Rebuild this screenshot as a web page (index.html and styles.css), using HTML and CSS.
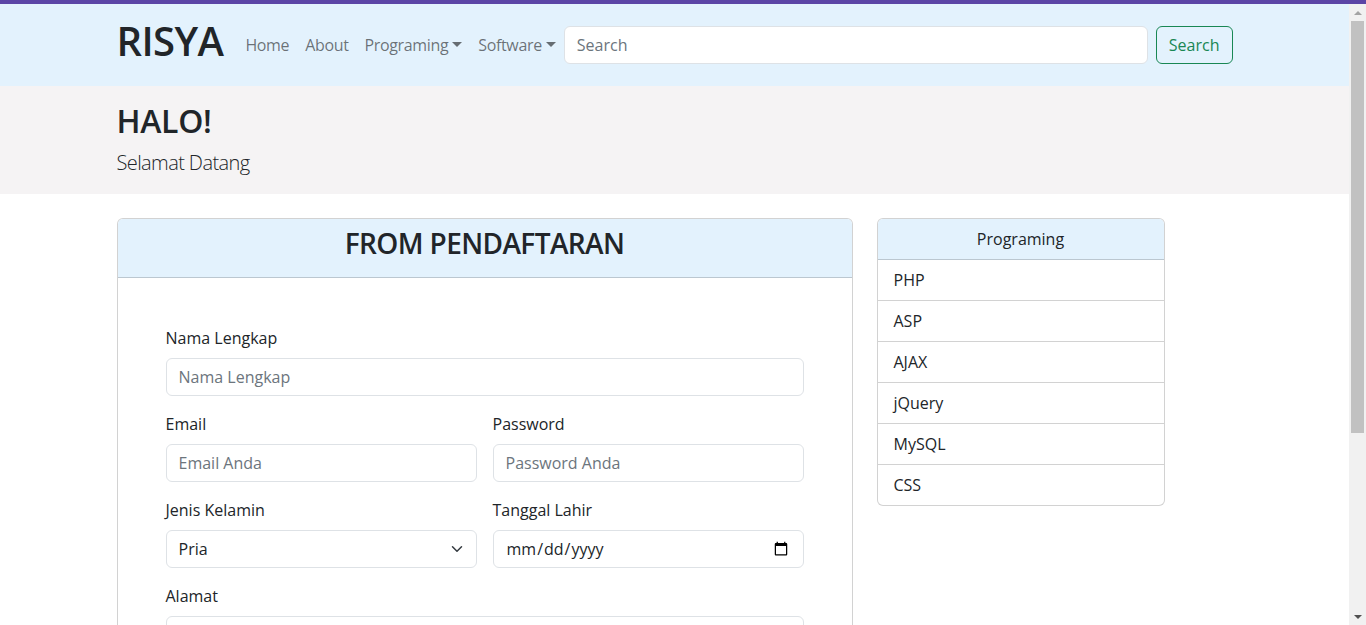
FILE: index.html
```html
<!DOCTYPE html>
<html lang="id">
<head>
<meta charset="utf-8">
<title>RISYA</title>
<link rel="stylesheet" href="styles.css">
</head>
<body>
<div class="topbar"></div>
<div class="frame">
<div class="viewport">
  <nav class="navbar">
    <div class="container nav-inner">
      <a class="brand" href="#">RISYA</a>
      <ul class="nav">
        <li><a class="nav-link" href="#">Home</a></li>
        <li><a class="nav-link" href="#">About</a></li>
        <li><a class="nav-link toggle" href="#">Programing</a></li>
        <li><a class="nav-link toggle" href="#">Software</a></li>
      </ul>
      <form class="search">
        <input class="control search-input" type="search" placeholder="Search">
        <button class="btn-outline" type="button">Search</button>
      </form>
    </div>
  </nav>

  <header class="hero">
    <div class="container">
      <h1 class="hero-title">HALO!</h1>
      <p class="lead">Selamat Datang</p>
    </div>
  </header>

  <main class="container main">
    <section class="card form-card">
      <div class="card-header">
        <h3 class="card-title">FROM PENDAFTARAN</h3>
      </div>
      <div class="card-body">
        <form class="reg-form">
          <div class="field">
            <label class="label">Nama Lengkap</label>
            <input class="control" type="text" placeholder="Nama Lengkap">
          </div>
          <div class="grid2">
            <div class="field">
              <label class="label">Email</label>
              <input class="control" type="email" placeholder="Email Anda">
            </div>
            <div class="field">
              <label class="label">Password</label>
              <input class="control" type="password" placeholder="Password Anda">
            </div>
          </div>
          <div class="grid2">
            <div class="field">
              <label class="label">Jenis Kelamin</label>
              <div class="select-wrap">
                <select class="control select">
                  <option>Pria</option>
                  <option>Wanita</option>
                </select>
                <svg class="chevron" viewBox="0 0 16 16" width="16" height="12"><path d="m2 5 6 6 6-6" fill="none" stroke="#343a40" stroke-width="2" stroke-linecap="round" stroke-linejoin="round"/></svg>
              </div>
            </div>
            <div class="field">
              <label class="label">Tanggal Lahir</label>
              <input class="control date" type="date">
            </div>
          </div>
          <div class="field">
            <label class="label">Alamat</label>
            <textarea class="control textarea" rows="3"></textarea>
          </div>
          <button class="btn-primary" type="button">Daftar</button>
        </form>
      </div>
    </section>

    <aside class="list-group">
      <div class="list-header">Programing</div>
      <a class="list-item" href="#">PHP</a>
      <a class="list-item" href="#">ASP</a>
      <a class="list-item" href="#">AJAX</a>
      <a class="list-item" href="#">jQuery</a>
      <a class="list-item" href="#">MySQL</a>
      <a class="list-item" href="#">CSS</a>
    </aside>
  </main>
</div>
<div class="scrollbar" aria-hidden="true">
  <div class="sb-btn"><span class="arrow-up"></span></div>
  <div class="sb-thumb"></div>
  <div class="sb-track"></div>
  <div class="sb-btn"><span class="arrow-down"></span></div>
</div>
</div>
</body>
</html>
```

FILE: styles.css
```css
* { box-sizing: border-box; }

html, body {
  height: 100%;
  margin: 0;
  overflow: hidden;
}

body {
  font-family: "Open Sans", "Noto Sans", sans-serif;
  font-size: 16px;
  line-height: 1.5;
  color: #212529;
  background: #fff;
}

.topbar {
  height: 4px;
  background: #5b45a6;
}

.frame {
  display: flex;
  height: calc(100% - 4px);
}

.viewport {
  flex: 1;
  min-width: 0;
  overflow: hidden;
}

/* window scrollbar */
.scrollbar {
  width: 17px;
  flex: none;
  display: flex;
  flex-direction: column;
  background: #f1f1f1;
}
.sb-btn {
  height: 17px;
  display: flex;
  align-items: center;
  justify-content: center;
}
.arrow-up {
  border-bottom: 4px solid #a3a3a3;
  border-left: 4px solid transparent;
  border-right: 4px solid transparent;
}
.arrow-down {
  border-top: 4px solid #505050;
  border-left: 4px solid transparent;
  border-right: 4px solid transparent;
}
.sb-thumb {
  height: 412px;
  margin: 0 2px;
  background: #c1c1c1;
}
.sb-track {
  flex: 1;
}

.container {
  width: 1140px;
  margin: 0 auto;
  padding: 0 12px;
}

/* navbar */
.navbar {
  background: #e3f2fd;
  padding: 8px 0;
}
.nav-inner {
  display: flex;
  align-items: center;
}
.brand {
  display: block;
  font-size: 40px;
  font-weight: 600;
  line-height: 48px;
  padding: 5px 0 13px;
  margin-right: 14px;
  color: #212529;
  text-decoration: none;
  letter-spacing: -0.6px;
}
.nav {
  display: flex;
  list-style: none;
  margin: 0;
  padding: 0;
}
.nav-link {
  display: block;
  padding: 8px;
  color: rgba(0, 0, 0, 0.55);
  text-decoration: none;
  letter-spacing: -0.35px;
}
.toggle::after {
  content: "";
  display: inline-block;
  margin-left: 4px;
  vertical-align: 4px;
  border-top: 5px solid;
  border-left: 5px solid transparent;
  border-right: 5px solid transparent;
}
.search {
  flex: 1;
  display: flex;
  margin: 0;
}
.control {
  display: block;
  width: 100%;
  height: 38px;
  padding: 6px 12px;
  font: inherit;
  font-size: 16px;
  line-height: 24px;
  color: #212529;
  background: #fff;
  border: 1px solid #dee2e6;
  border-radius: 6px;
}
.control::placeholder {
  color: #6c757d;
  opacity: 1;
}
.search-input {
  flex: 1;
  margin-right: 8px;
}
.btn-outline {
  font: inherit;
  font-size: 16px;
  line-height: 24px;
  padding: 6px 12px;
  color: #198754;
  background: transparent;
  border: 1px solid #198754;
  border-radius: 6px;
}

/* hero */
.hero {
  background: #f5f3f4;
  padding-top: 16px;
}
.hero-title {
  margin: 0 0 8px;
  font-size: 32px;
  font-weight: 600;
  line-height: 38.4px;
  letter-spacing: -0.3px;
}
.lead {
  margin: 0;
  padding-bottom: 16px;
  font-size: 20px;
  font-weight: 300;
  line-height: 30px;
  letter-spacing: -0.6px;
}

/* main */
.main {
  display: flex;
  align-items: flex-start;
  gap: 24px;
  padding-top: 24px;
  padding-bottom: 80px;
}
.card {
  border: 1px solid rgba(0, 0, 0, 0.175);
  border-radius: 6px;
  background: #fff;
  overflow: hidden;
}
.form-card {
  width: 736px;
}
.card-header {
  background: #e3f2fd;
  padding: 8px 16px;
  border-bottom: 1px solid rgba(0, 0, 0, 0.175);
}
.card-title {
  margin: 0 0 8px;
  font-size: 28px;
  font-weight: 600;
  line-height: 33.6px;
  text-align: center;
  letter-spacing: -0.6px;
}
.card-body {
  padding: 16px;
}
.reg-form {
  padding: 32px;
}
.field {
  margin-bottom: 16px;
}
.label {
  display: block;
  margin-bottom: 8px;
  line-height: 24px;
}
.grid2 {
  display: grid;
  grid-template-columns: 1fr 1fr;
  gap: 0 16px;
}
.select-wrap {
  position: relative;
}
.select {
  appearance: none;
  -webkit-appearance: none;
  padding-right: 36px;
}
.chevron {
  position: absolute;
  right: 12px;
  top: 13px;
  pointer-events: none;
}
.textarea {
  height: auto;
  resize: vertical;
}
.btn-primary {
  font: inherit;
  line-height: 24px;
  padding: 6px 12px;
  color: #fff;
  background: #0d6efd;
  border: 1px solid #0d6efd;
  border-radius: 6px;
}

/* list group */
.list-group {
  width: 288px;
  border: 1px solid rgba(0, 0, 0, 0.175);
  border-radius: 6px;
  overflow: hidden;
  background: #fff;
}
.list-header {
  background: #e3f2fd;
  padding: 8px 16px;
  text-align: center;
  border-bottom: 1px solid rgba(0, 0, 0, 0.175);
}
.list-item {
  display: block;
  padding: 8px 16px;
  color: #212529;
  text-decoration: none;
  border-bottom: 1px solid rgba(0, 0, 0, 0.175);
}
.list-item:last-child {
  border-bottom: 0;
}
```
